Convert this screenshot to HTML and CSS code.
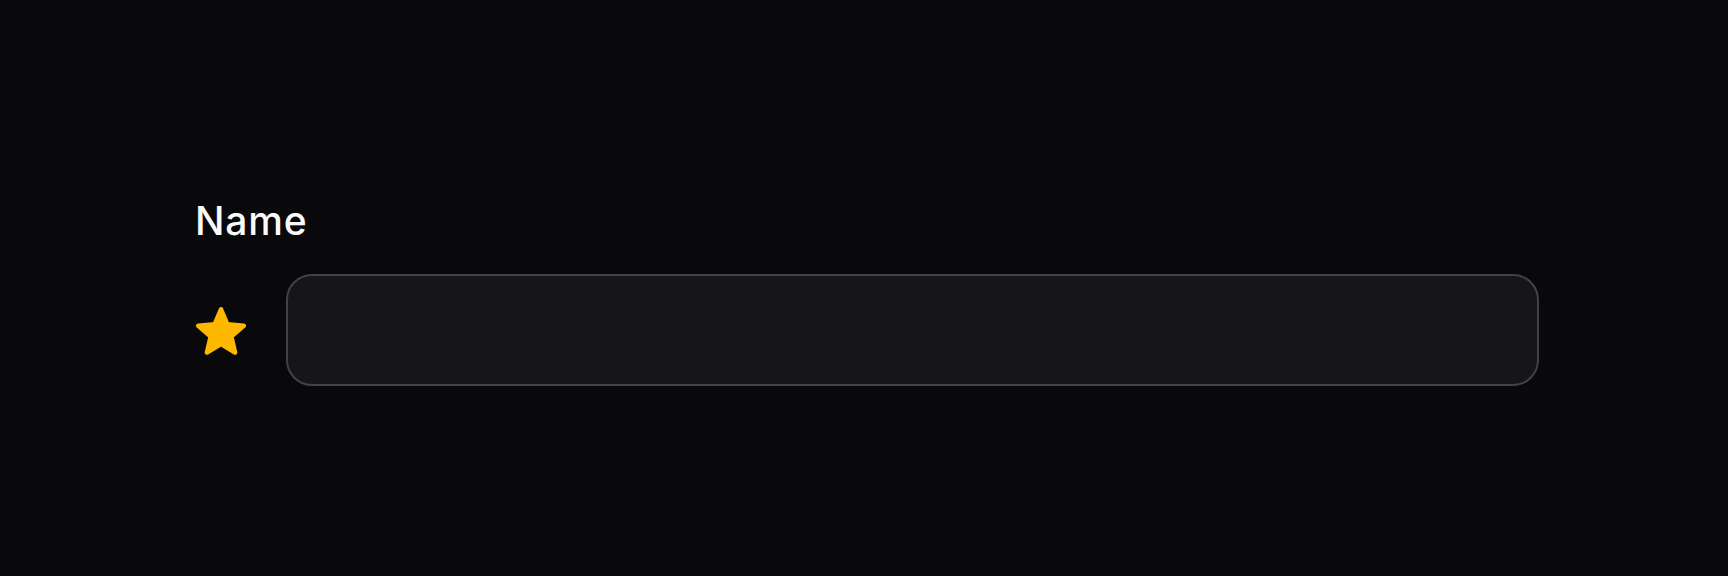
FILE: index.html
```html
<!DOCTYPE html>
<html lang="en">
<head>
<meta charset="utf-8">
<title>Name field</title>
<link rel="stylesheet" href="styles.css">
</head>
<body>
<main class="page">
  <label class="field-label" for="name">Name</label>
  <div class="field-row">
    <svg class="star" viewBox="1 1 22 22" aria-hidden="true">
      <path d="M12 17.27L18.18 21l-1.64-7.03L22 9.24l-7.19-.61L12 2 9.19 8.63 2 9.24l5.46 4.73L5.82 21z"/>
    </svg>
    <input class="field-input" id="name" type="text">
  </div>
</main>
</body>
</html>
```
FILE: styles.css
```css
html, body {
  margin: 0;
  padding: 0;
  background: #09090b;
  height: 100%;
}
.page {
  box-sizing: border-box;
  height: 100vh;
  padding: 200px 189px 0 195px;
  display: flex;
  flex-direction: column;
  font-family: Inter, "Liberation Sans", sans-serif;
}
.field-label {
  color: #fafafa;
  font-size: 39px;
  font-weight: 500;
  letter-spacing: 0.8px;
  line-height: 42px;
  margin-bottom: 32px;
}
.field-row {
  display: flex;
  align-items: center;
  gap: 40px;
  padding-left: 1px;
}
.star {
  width: 50px;
  height: 50px;
  flex: none;
  margin-top: 3px;
  fill: #ffb800;
  stroke: #ffb800;
  stroke-width: 2;
  stroke-linejoin: round;
}
.field-input {
  flex: 1;
  min-width: 0;
  box-sizing: border-box;
  height: 112px;
  background: #161618;
  border: 2px solid #424246;
  border-radius: 26px;
  outline: none;
  color: #fafafa;
  font: inherit;
  font-size: 24px;
  padding: 0 24px;
}
```
